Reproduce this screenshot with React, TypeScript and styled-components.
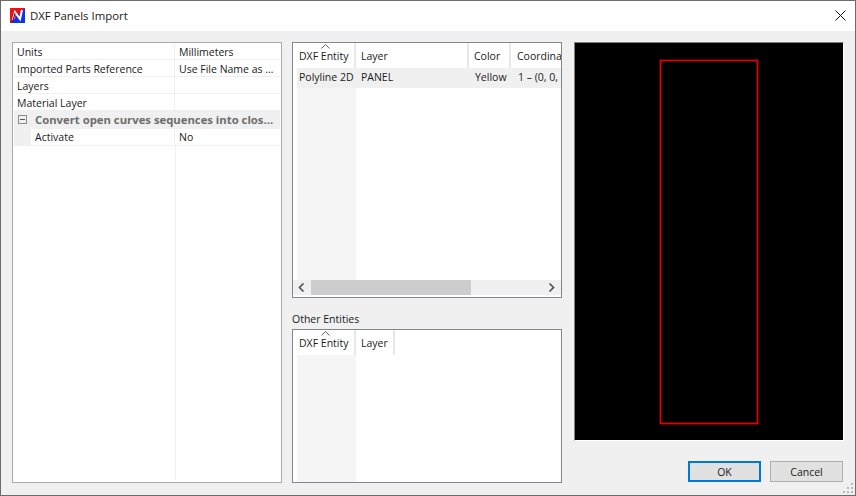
import styled, { createGlobalStyle } from 'styled-components'

const GlobalStyle = createGlobalStyle`
    html, body {
        margin: 0;
        padding: 0;
        background: #f0f0f0;
    }
    * {
        box-sizing: border-box;
    }
`

const Window = styled.div`
    width: 856px;
    height: 496px;
    position: relative;
    display: flex;
    flex-direction: column;
    background: #f0f0f0;
    border: 1px solid #6b6b6b;
    font-family: "Open Sans", "Liberation Sans", sans-serif;
    font-size: 10.5px;
    color: #1a1a1a;
    overflow: hidden;
`

const TitleBar = styled.div`
    height: 30px;
    flex: none;
    display: flex;
    align-items: center;
    background: #fff;
    padding: 0 9px 2px 9px;
    font-size: 11.4px;
`

const TitleText = styled.span`
    margin-left: 5px;
    flex: 1;
`

const Content = styled.div`
    flex: 1;
    display: grid;
    grid-template-columns: 270px 270px 270px;
    column-gap: 10px;
    padding: 11px 11px 12px;
    min-height: 0;
`

const Panel = styled.div<{ $height?: number }>`
    background: #fff;
    border: 1px solid #82868e;
    display: flex;
    flex-direction: column;
    overflow: hidden;
    height: ${p => (p.$height ? `${p.$height}px` : 'auto')};
`

const PropertyPanel = styled(Panel)`
    border-color: #a8a8ae;
    padding: 0 1px 2px;
`

const PropRow = styled.div`
    display: grid;
    grid-template-columns: 161px 1fr;
    height: 17px;
    line-height: 18px;
    flex: none;
    border-bottom: 1px solid #f0f0f0;
`

const PropCell = styled.div`
    padding-left: 3px;
    border-right: 1px solid #f0f0f0;
    white-space: nowrap;
    overflow: hidden;
`

const PropValue = styled.div`
    padding-left: 4px;
    white-space: nowrap;
    overflow: hidden;
`

const GroupRow = styled.div`
    height: 18px;
    flex: none;
    display: flex;
    align-items: center;
    background: #f0f0f0;
    padding: 0 0 1px 4px;
    font-size: 11.3px;
    font-weight: 700;
    color: #6d6d6d;
    white-space: nowrap;
`

const Expander = styled.span`
    width: 9px;
    height: 9px;
    border: 1px solid #8c8c8c;
    margin-right: 8px;
    display: flex;
    align-items: center;
    justify-content: center;

    &::before {
        content: "";
        width: 5px;
        height: 1px;
        background: #555;
    }
`

const ChildRow = styled(PropRow)`
    line-height: 16px;
    background: linear-gradient(90deg, #f0f0f0 17px, #fff 17px);
`

const ChildLabel = styled(PropCell)`
    padding-left: 21px;
`

const PropFiller = styled.div`
    flex: 1;
    width: 162px;
    border-right: 1px solid #f0f0f0;
`

const MiddleColumn = styled.div`
    display: flex;
    flex-direction: column;
`

const HeaderRow = styled.div`
    display: flex;
    height: 25px;
    flex: none;
    background: #fff;
`

const HeaderCell = styled.div<{ $width: number; $pad?: number }>`
    position: relative;
    width: ${p => p.$width}px;
    flex: none;
    padding: 5px 0 0 ${p => p.$pad || 5}px;
    line-height: 16px;
    border-right: 2px solid #e8e8e8;
    white-space: nowrap;
    overflow: hidden;
`

const LastHeaderCell = styled(HeaderCell)`
    border-right: none;
`

const SortCaret = styled.svg`
    position: absolute;
    left: 28px;
    top: 1px;
`

const TableBody = styled.div`
    flex: 1;
    min-height: 0;
    background: linear-gradient(90deg, #fff 4px, #f5f5f5 4px, #f5f5f5 63px, #fff 63px);
`

const DataRow = styled.div`
    display: flex;
    height: 20px;
    margin-left: 4px;
    background: #f0f0f0;
    line-height: 19px;
    overflow: hidden;
`

const DataCell = styled.div<{ $width: number; $pad?: number }>`
    width: ${p => p.$width}px;
    flex: none;
    padding-left: ${p => p.$pad || 5}px;
    white-space: nowrap;
    overflow: hidden;
`

const ScrollBar = styled.div`
    height: 15px;
    flex: none;
    margin-bottom: 2px;
    display: flex;
    align-items: center;
    justify-content: space-between;
    position: relative;
    background: #f0f0f0;
    padding: 0 6px 0 5px;
`

const ScrollThumb = styled.div`
    position: absolute;
    left: 18px;
    top: 0;
    width: 160px;
    height: 15px;
    background: #cdcdcd;
`

const SectionLabel = styled.div`
    margin-top: 13px;
    height: 18px;
    line-height: 16px;
`

const RightColumn = styled.div`
    display: flex;
    flex-direction: column;
    width: 270px;
    margin-left: 2px;
`

const Preview = styled.div`
    width: 270px;
    height: 399px;
    background: #000;
    border-top: 1px solid #7f7f7f;
    border-left: 1px solid #7f7f7f;
    border-right: 1px solid #fff;
    border-bottom: 1px solid #fff;
    flex: none;
`

const ButtonRow = styled.div`
    margin: 20px 1px 0 0;
    display: flex;
    justify-content: flex-end;
    gap: 9px;
`

const Button = styled.button<{ $primary?: boolean }>`
    width: 73px;
    height: 21px;
    padding: 0;
    background: #e1e1e1;
    border: ${p => (p.$primary ? '2px solid #0078d7' : '1px solid #adadad')};
    font: inherit;
    color: #1a1a1a;
`

const Grip = styled.svg`
    position: absolute;
    right: 1px;
    bottom: 1px;
`

const columns = [
    { title: 'DXF Entity', width: 63, pad: 6 },
    { title: 'Layer', width: 113 },
    { title: 'Color', width: 42 },
    { title: 'Coordina', width: 50 },
]

const AppLogo = () => (
    <svg width="15" height="15" viewBox="0 0 15 15">
        <rect width="15" height="15" fill="#f01010" />
        <polygon points="15,0 15,15 0,15" fill="#1030f0" />
        <path d="M3 12 L5 4 L10 11 L12 2" fill="none" stroke="#fff" strokeWidth="2" />
        <path d="M3 13 L5 5" stroke="#101060" strokeWidth="1" />
    </svg>
)

const Caret = () => (
    <SortCaret width="9" height="5" viewBox="0 0 9 5">
        <path d="M0.5 4.5 L4.5 0.5 L8.5 4.5" fill="none" stroke="#666" />
    </SortCaret>
)

const App = () => {
    return (
        <Window>
            <GlobalStyle />
            <TitleBar>
                <AppLogo />
                <TitleText>DXF Panels Import</TitleText>
                <svg width="11" height="11" viewBox="0 0 11 11">
                    <path d="M0.5 0.5 L10.5 10.5 M10.5 0.5 L0.5 10.5" stroke="#111" strokeWidth="1" />
                </svg>
            </TitleBar>
            <Content>
                <PropertyPanel>
                    <PropRow>
                        <PropCell>Units</PropCell>
                        <PropValue>Millimeters</PropValue>
                    </PropRow>
                    <PropRow>
                        <PropCell>Imported Parts Reference</PropCell>
                        <PropValue>Use File Name as …</PropValue>
                    </PropRow>
                    <PropRow>
                        <PropCell>Layers</PropCell>
                        <PropValue />
                    </PropRow>
                    <PropRow>
                        <PropCell>Material Layer</PropCell>
                        <PropValue />
                    </PropRow>
                    <GroupRow>
                        <Expander />
                        Convert open curves sequences into clos...
                    </GroupRow>
                    <ChildRow>
                        <ChildLabel>Activate</ChildLabel>
                        <PropValue>No</PropValue>
                    </ChildRow>
                    <PropFiller />
                </PropertyPanel>

                <MiddleColumn>
                    <Panel $height={256}>
                        <HeaderRow>
                            <HeaderCell $width={columns[0].width} $pad={columns[0].pad}>
                                {columns[0].title}
                                <Caret />
                            </HeaderCell>
                            <HeaderCell $width={columns[1].width}>{columns[1].title}</HeaderCell>
                            <HeaderCell $width={columns[2].width}>{columns[2].title}</HeaderCell>
                            <LastHeaderCell $width={columns[3].width} $pad={6}>{columns[3].title}</LastHeaderCell>
                        </HeaderRow>
                        <TableBody>
                            <DataRow>
                                <DataCell $width={59} $pad={2}>Polyline 2D</DataCell>
                                <DataCell $width={113}>PANEL</DataCell>
                                <DataCell $width={42} $pad={6}>Yellow</DataCell>
                                <DataCell $width={50} $pad={7}>1 – (0, 0,</DataCell>
                            </DataRow>
                        </TableBody>
                        <ScrollBar>
                            <ScrollThumb />
                            <svg width="7" height="9" viewBox="0 0 7 9">
                                <path d="M5.5 0.5 L1.5 4.5 L5.5 8.5" fill="none" stroke="#505050" strokeWidth="1.6" />
                            </svg>
                            <svg width="7" height="9" viewBox="0 0 7 9">
                                <path d="M1.5 0.5 L5.5 4.5 L1.5 8.5" fill="none" stroke="#505050" strokeWidth="1.6" />
                            </svg>
                        </ScrollBar>
                    </Panel>
                    <SectionLabel>Other Entities</SectionLabel>
                    <Panel $height={154}>
                        <HeaderRow>
                            <HeaderCell $width={63} $pad={6}>
                                DXF Entity
                                <Caret />
                            </HeaderCell>
                            <HeaderCell $width={39}>Layer</HeaderCell>
                        </HeaderRow>
                        <TableBody />
                    </Panel>
                </MiddleColumn>

                <RightColumn>
                    <Preview>
                        <svg width="268" height="397" viewBox="0 0 268 397">
                            <rect x="85.5" y="17.5" width="97" height="363" fill="none" stroke="#e00000" strokeWidth="1.8" />
                        </svg>
                    </Preview>
                    <ButtonRow>
                        <Button $primary>OK</Button>
                        <Button>Cancel</Button>
                    </ButtonRow>
                </RightColumn>
            </Content>
            <Grip width="11" height="11" viewBox="0 0 11 11" fill="#b8b8b8">
                <rect x="8" y="0" width="2" height="2" />
                <rect x="4" y="4" width="2" height="2" />
                <rect x="8" y="4" width="2" height="2" />
                <rect x="0" y="8" width="2" height="2" />
                <rect x="4" y="8" width="2" height="2" />
                <rect x="8" y="8" width="2" height="2" />
            </Grip>
        </Window>
    )
}

export default App
